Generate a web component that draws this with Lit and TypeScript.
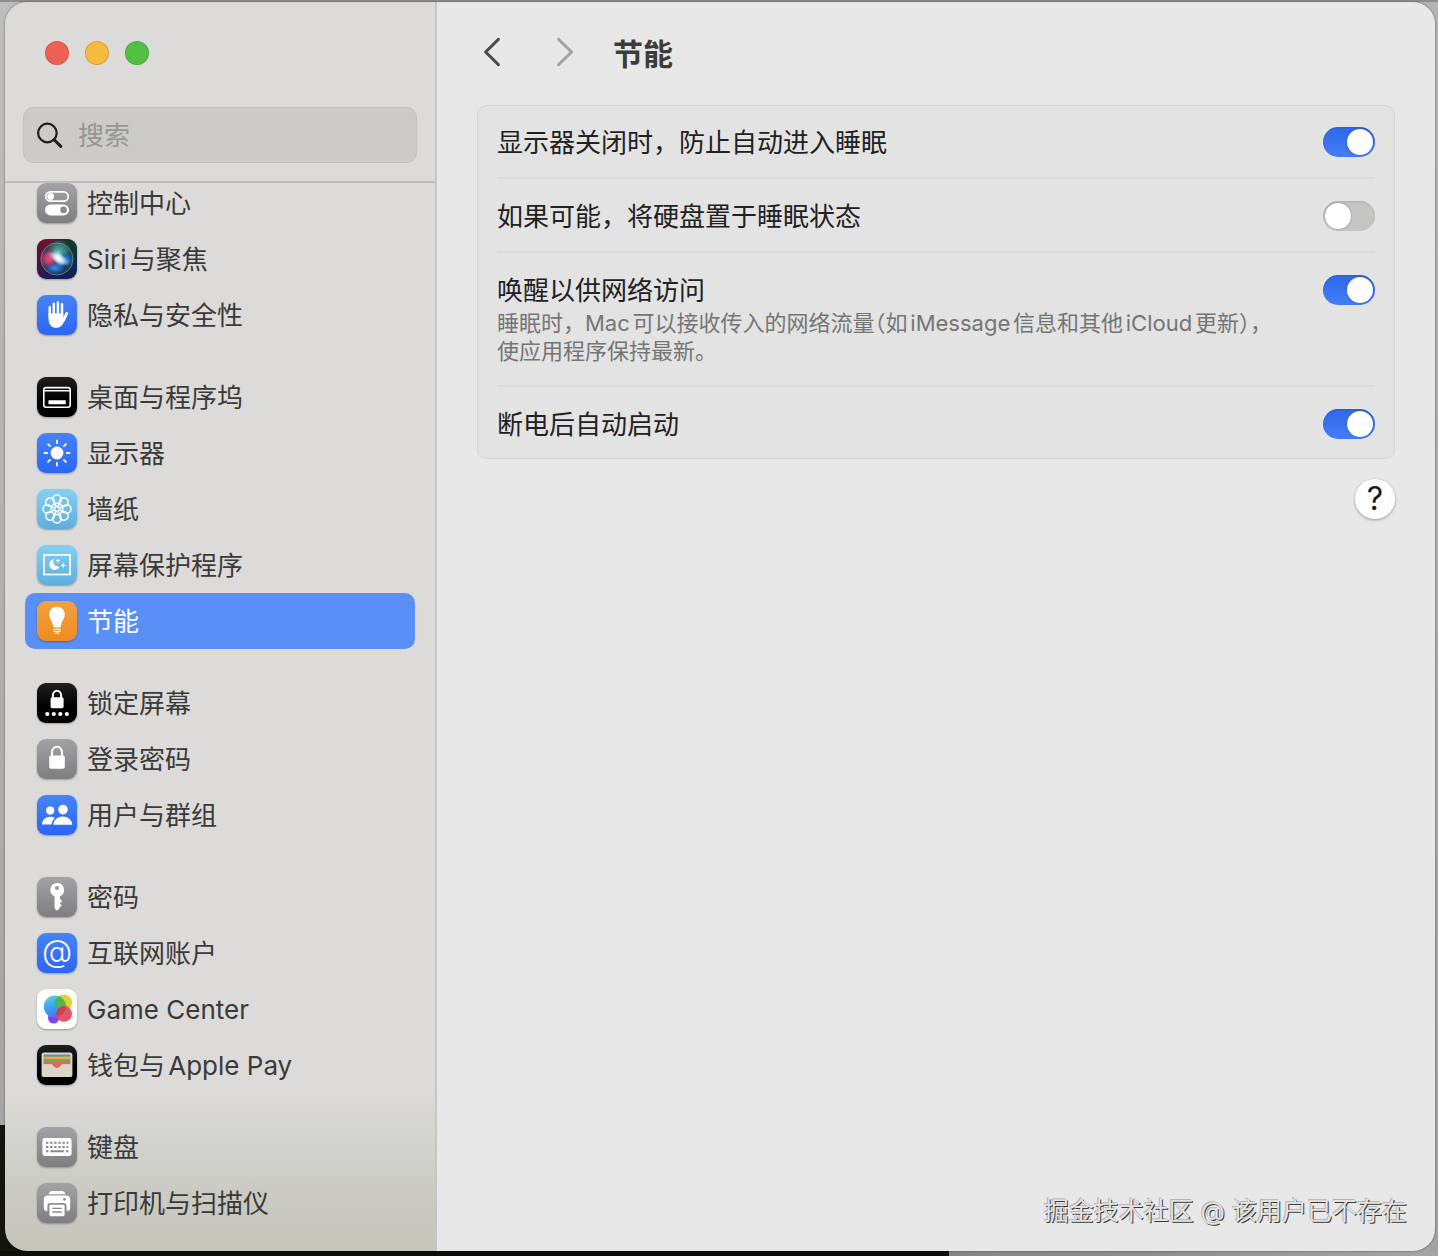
import { LitElement, html, svg, css, nothing, type TemplateResult } from "lit";
import { customElement, property, state } from "lit/decorators.js";
import { classMap } from "lit/directives/class-map.js";

interface Entry {
  id: string;
  label: string;
  tint: string;
}

interface Setting {
  id: string;
  label: string;
  note?: string;
  on: boolean;
}

const petal = (angle: number) => svg`
  <g transform="rotate(${angle} 20 20)">
    <circle cx="20" cy="10.2" r="4.2"/>
    <path stroke-width="1.1" d="M16.3 12.2L19.4 17.6M23.7 12.2L20.6 17.6"/>
  </g>`;

const GLYPHS: Record<string, TemplateResult> = {
  control: svg`
    <rect x="8.8" y="8.8" width="22.4" height="9.4" rx="4.7" fill="none" stroke="#fff" stroke-width="1.7"/>
    <circle cx="13.7" cy="13.5" r="3.4" fill="#fff"/>
    <rect x="8" y="21.4" width="24" height="11" rx="5.5" fill="#fff"/>
    <circle cx="26.6" cy="26.9" r="3.3" fill="#8b8b8d"/>`,
  siri: svg`
    <defs>
      <radialGradient id="core"><stop offset="0" stop-color="#fff"/><stop offset=".3" stop-color="#e6f6ff" stop-opacity=".85"/><stop offset="1" stop-color="#9fd8f5" stop-opacity="0"/></radialGradient>
      <radialGradient id="pink"><stop offset="0" stop-color="#f0457c"/><stop offset=".5" stop-color="#d83c68" stop-opacity=".8"/><stop offset="1" stop-color="#c3305f" stop-opacity="0"/></radialGradient>
      <radialGradient id="teal"><stop offset="0" stop-color="#55b5a2"/><stop offset=".5" stop-color="#3f9486" stop-opacity=".8"/><stop offset="1" stop-color="#2a8f80" stop-opacity="0"/></radialGradient>
      <radialGradient id="azure"><stop offset="0" stop-color="#3a90f2"/><stop offset=".5" stop-color="#2870d0" stop-opacity=".8"/><stop offset="1" stop-color="#1c50b8" stop-opacity="0"/></radialGradient>
    </defs>
    <circle cx="20" cy="20" r="16" fill="#28435c" fill-opacity=".8"/>
    <circle cx="22" cy="12.5" r="12" fill="url(#teal)"/>
    <circle cx="12.5" cy="20" r="10" fill="url(#pink)"/>
    <ellipse cx="28" cy="21" rx="9" ry="7" fill="url(#azure)"/>
    <ellipse cx="18" cy="29" rx="10" ry="6" fill="url(#azure)"/>
    <ellipse cx="21.5" cy="19.5" rx="13" ry="5" transform="rotate(28 21.5 19.5)" fill="url(#core)"/>
    <ellipse cx="21.5" cy="19" rx="6" ry="10" transform="rotate(-30 21.5 19)" fill="url(#core)"/>
    <circle cx="20" cy="20" r="16" fill="none" stroke="#8fa3ac" stroke-opacity=".65"/>`,
  privacy: svg`
    <g fill="none" stroke="#fff" stroke-width="2.5" stroke-linecap="round">
      <path d="M12.7 12.2V22M16.8 8.8V20M20.9 7.4V20M25 9.2V21"/>
      <path stroke-width="2.8" d="M29.8 18.4L26.2 25.8"/>
    </g>
    <path fill="#fff" d="M11.5 18.5H26.3V22.4L28.4 22.6C26.6 28.8 24.6 32.8 19.8 32.8C14.2 32.8 11.5 29.4 11.5 23Z"/>`,
  dock: svg`
    <rect x="6.8" y="10.6" width="26.4" height="19.6" rx="2.2" fill="none" stroke="#fff" stroke-width="1.6"/>
    <path d="M7 13.8H33" stroke="#fff" stroke-width="1.4"/>
    <rect x="11.4" y="23.2" width="17.4" height="4" rx=".6" fill="#fff"/>`,
  display: svg`
    <circle cx="20" cy="20" r="6.4" fill="#fff"/>
    <path fill="none" stroke="#fff" stroke-width="1.8" stroke-linecap="round" d="M20 7.4V10.2M20 29.8V32.6M7.4 20H10.2M29.8 20H32.6M11.1 11.1L13.1 13.1M26.9 26.9L28.9 28.9M11.1 28.9L13.1 26.9M26.9 13.1L28.9 11.1"/>`,
  wallpaper: svg`
    <g fill="none" stroke="#fff" stroke-width="1.5">
      ${[0, 45, 90, 135, 180, 225, 270, 315].map(petal)}
      <circle cx="20" cy="20" r="2.4" stroke-width="1.2"/>
    </g>`,
  saver: svg`
    <rect x="6.9" y="9.9" width="26.2" height="19.6" fill="none" stroke="#fff" stroke-width="1.7"/>
    <path fill="#fff" d="M16.6 14.2A5.4 5.4 0 1 0 22.6 21.7A5.6 5.6 0 0 1 16.6 14.2Z"/>
    <path fill="#fff" d="M21 13.2L21.7 15L23.4 15.6L21.7 16.3L21 18L20.3 16.3L18.6 15.6L20.3 15ZM26.2 17.6L27 19.7L29.1 20.4L27 21.2L26.2 23.3L25.4 21.2L23.3 20.4L25.4 19.7Z"/>`,
  energy: svg`
    <path fill="#fff" d="M20 5.8C24.6 5.8 27.8 9.1 27.8 13.4C27.8 17.6 24.8 19.4 24 24.4C23.8 25.8 23.2 26.4 22 26.4H18C16.8 26.4 16.2 25.8 16 24.4C15.2 19.4 12.2 17.6 12.2 13.4C12.2 9.1 15.4 5.8 20 5.8Z"/>
    <path fill="none" stroke="#fff" stroke-width="1.2" stroke-linecap="round" d="M16.6 28.3H23.4M16.8 30.3H23.2M18.4 32.2H21.6"/>`,
  lockscreen: svg`
    <path fill="none" stroke="#fff" stroke-width="2" d="M15.9 15V12.4A4.1 4.6 0 0 1 24.1 12.4V15"/>
    <rect x="13.6" y="14.2" width="13" height="11" rx="1.6" fill="#fff"/>
    <g fill="#fff"><circle cx="10.3" cy="31" r="2.1"/><circle cx="16.8" cy="31" r="2.1"/><circle cx="23.3" cy="31" r="2.1"/><circle cx="29.8" cy="31" r="2.1"/></g>`,
  login: svg`
    <path fill="none" stroke="#fff" stroke-width="2" d="M15 17.5V13.4A5 5.6 0 0 1 25 13.4V17.5"/>
    <rect x="12.2" y="16.6" width="15.6" height="13.2" rx="1.8" fill="#fff"/>`,
  users: svg`
    <g fill="#fff">
      <circle cx="13.2" cy="15.6" r="4.1"/>
      <path d="M5 29.6C5 25 8.6 21.8 13.2 21.8C15.2 21.8 16.8 22.3 18 23.2C15.9 24.8 14.8 27 14.7 29.6Z"/>
      <circle cx="26" cy="14.6" r="4.8"/>
      <path d="M16.4 29.8C16.4 25 20.4 21.4 25.8 21.4C31.2 21.4 35.2 25 35.2 29.8Z"/>
    </g>`,
  key: svg`
    <path fill="#fff" fill-rule="evenodd" d="M20 6A7 7 0 0 1 22.9 19.4V21.6L25.2 24L22.9 26.2L24.8 28.4L22.6 30.6V31.2L20 33.8L17.6 31.6V19.4A7 7 0 0 1 20 6ZM20 8.9A2.1 2.1 0 1 0 20 13.1A2.1 2.1 0 1 0 20 8.9Z"/>`,
  internet: svg`<text x="20" y="29" text-anchor="middle" fill="#fff" font-size="31" font-family="Inter, sans-serif" font-weight="300">@</text>`,
  game: svg`
    <defs>
      <linearGradient id="gb" x1="0" y1="0" x2=".4" y2="1"><stop offset="0" stop-color="#6fdcc0"/><stop offset=".5" stop-color="#3ea6ee"/><stop offset="1" stop-color="#3b7cf4"/></linearGradient>
      <linearGradient id="gy" x1="0" y1="1" x2="1" y2="0"><stop offset="0" stop-color="#3fb54a"/><stop offset=".45" stop-color="#c9d932"/><stop offset="1" stop-color="#fdc92f"/></linearGradient>
      <linearGradient id="gr" x1="0" y1="0" x2="1" y2="1"><stop offset="0" stop-color="#d8574a"/><stop offset="1" stop-color="#f23a68"/></linearGradient>
    </defs>
    <circle cx="16.6" cy="29" r="5.6" fill="#8b3df0"/>
    <circle cx="26.8" cy="13.8" r="8.4" fill="url(#gy)"/>
    <circle cx="17.8" cy="17.6" r="11" fill="url(#gb)"/>
    <path fill="#4cb84c" d="M21.4 7.2A11 11 0 0 1 28.1 21.9A8.4 8.4 0 0 1 21.4 7.2Z"/>
    <circle cx="27" cy="24.8" r="8" fill="url(#gr)" fill-opacity=".93"/>
    <path fill="#b3304f" fill-opacity=".5" d="M19.1 26.5C18.6 22 22.5 16.9 28.4 17C29 22.5 25 27.8 19.1 26.5Z"/>`,
  wallet: svg`
    <rect x="4.6" y="7.4" width="30.8" height="24.6" rx="2.6" fill="#d9d6ca"/>
    <rect x="6.6" y="9.4" width="26.8" height="4" rx="1" fill="#5f93b5"/>
    <rect x="6.6" y="11.6" width="26.8" height="3.4" fill="#e3b040"/>
    <rect x="6.6" y="14" width="26.8" height="3.4" fill="#70a95b"/>
    <path fill="#e0685c" d="M6.6 16.6H33.4V19.6H25.4C24 19.6 23 23 20 23C17 23 16 19.6 14.6 19.6H6.6Z"/>
    <path fill="#d9d6ca" d="M6.6 19.2H14.2C16 19.2 16.4 23 20 23C23.6 23 24 19.2 25.8 19.2H33.4V30H6.6Z"/>`,
  keyboard: svg`
    <rect x="5.4" y="11" width="29.2" height="18" rx="2.4" fill="#fff"/>
    <g fill="none" stroke="#8a8a8d" stroke-width="2">
      <path stroke-dasharray="2.4 1.7" d="M9 15.8H31.4M9 20H31.4"/>
      <path d="M9 24.2H11.4M13.4 24.2H26.8M28.9 24.2H31.3"/>
    </g>`,
  printer: svg`
    <path fill="#fff" d="M11.6 11.2C12 9 13.2 8 15.2 8H24.8C26.8 8 28 9 28.4 11.2Z"/>
    <path fill="#fff" d="M10.6 12.4H29.4C31.8 12.4 33.2 13.9 33.2 16.2V24.4C33.2 26.9 32 28.2 29.6 28.2V23C29.6 21 28.6 20 26.6 20H13.4C11.4 20 10.4 21 10.4 23V28.2C8 28.2 6.8 26.9 6.8 24.4V16.2C6.8 13.9 8.2 12.4 10.6 12.4Z"/>
    <circle cx="27.4" cy="16.4" r="1.3" fill="#8a8a8d"/>
    <rect x="12.4" y="21.8" width="15.2" height="11.4" rx="1.4" fill="#fff"/>
    <path stroke="#8a8a8d" stroke-width="1.4" stroke-linecap="round" d="M15.8 25.4H24.2M15.8 29H24.2"/>`,
};

const GROUPS: Entry[][] = [
  [
    { id: "control", label: "控制中心", tint: "gray" },
    { id: "siri", label: "Siri与聚焦", tint: "siri" },
    { id: "privacy", label: "隐私与安全性", tint: "blue" },
  ],
  [
    { id: "dock", label: "桌面与程序坞", tint: "black" },
    { id: "display", label: "显示器", tint: "blue" },
    { id: "wallpaper", label: "墙纸", tint: "sky" },
    { id: "saver", label: "屏幕保护程序", tint: "sky" },
    { id: "energy", label: "节能", tint: "orange" },
  ],
  [
    { id: "lockscreen", label: "锁定屏幕", tint: "black" },
    { id: "login", label: "登录密码", tint: "gray" },
    { id: "users", label: "用户与群组", tint: "blue" },
  ],
  [
    { id: "key", label: "密码", tint: "gray" },
    { id: "internet", label: "互联网账户", tint: "blue" },
    { id: "game", label: "Game Center", tint: "white" },
    { id: "wallet", label: "钱包与Apple Pay", tint: "black" },
  ],
  [
    { id: "keyboard", label: "键盘", tint: "gray" },
    { id: "printer", label: "打印机与扫描仪", tint: "gray" },
  ],
];

@customElement("settings-icon")
export class SettingsIcon extends LitElement {
  @property() name = "";
  @property() tint = "gray";

  static styles = css`
    :host { display: block; flex: none; width: 40px; height: 40px; }
    .tile { display: block; width: 40px; height: 40px; border-radius: 9px; box-shadow: 0 1px 2px rgba(0, 0, 0, 0.3); }
    .gray { background: linear-gradient(#a3a3a5, #7e7e80); }
    .blue { background: linear-gradient(#4683f7, #2c66f4); }
    .black { background: linear-gradient(#1f1f1f, #000 60%); }
    .sky { background: linear-gradient(#83d0f5, #5eaedd); }
    .orange { background: linear-gradient(#f0a33d, #ef8b22); }
    .white { background: #fff; }
    .siri { background: conic-gradient(from 45deg, #0c3a30, #0d2454 90deg, #12205a 150deg, #5c1038 230deg, #6b1430 290deg, #12352e 350deg, #0c3a30); }
  `;

  render() {
    return html`<svg class="tile ${this.tint}" viewBox="0 0 40 40" aria-hidden="true">${GLYPHS[this.name] ?? nothing}</svg>`;
  }
}

@customElement("settings-sidebar")
export class SettingsSidebar extends LitElement {
  @property() current = "";

  static styles = css`
    :host {
      display: flex; flex-direction: column; box-sizing: border-box; flex: none; width: 432px;
      border-right: 2px solid #c6c6c4;
      background: linear-gradient(to top, #c5c5bc, #cbcbc4 60px, #dcdbd9 160px);
    }
    .head {
      display: flex; flex-direction: column; gap: 42px;
      padding: 39px 18px 18px; border-bottom: 2px solid #bebdbb;
    }
    .lights { display: flex; gap: 16px; padding-left: 22px; }
    .light { width: 24px; height: 24px; padding: 0; border: 1px solid rgba(0, 0, 0, 0.12); border-radius: 50%; }
    .close { background: #ee6254; }
    .minimize { background: #f5ba3f; }
    .zoom { background: #52c043; }
    .search {
      display: flex; align-items: center; gap: 14px; box-sizing: border-box; height: 56px;
      padding: 0 12px; border: 1px solid #c3c2c0; border-radius: 10px; background: #cccbc9;
    }
    .lens { flex: none; width: 28px; height: 28px; }
    .field { flex: 1; min-width: 0; padding: 2px 0 0; border: 0; outline: 0; background: none; font: inherit; color: #222; }
    .field::placeholder { color: #969694; opacity: 1; }
    .scroll { flex: 1; overflow: hidden; padding: 0 20px 20px; }
    .list { display: flex; flex-direction: column; gap: 26px; margin-top: -8px; }
    .group { margin: 0; padding: 0; list-style: none; }
    .item {
      display: flex; align-items: center; gap: 10px; height: 56px; padding: 0 12px;
      border-radius: 10px; color: #3a3a39; text-decoration: none; white-space: nowrap;
    }
    .name { padding-top: 2px; }
    .selected { background: #5a8ff8; color: #fff; }
  `;

  private pick(event: Event, id: string) {
    event.preventDefault();
    this.dispatchEvent(new CustomEvent("pick", { detail: id }));
  }

  render() {
    return html`
      <div class="head">
        <div class="lights">
          <button class="light close" aria-label="关闭"></button>
          <button class="light minimize" aria-label="最小化"></button>
          <button class="light zoom" aria-label="缩放"></button>
        </div>
        <label class="search">
          <svg class="lens" viewBox="0 0 28 28" fill="none" stroke="#1c1c1c" stroke-linecap="round" aria-hidden="true">
            <circle cx="11.4" cy="12" r="9.3" stroke-width="2.2"/>
            <path d="M18.2 18.8L24.8 25.4" stroke-width="3"/>
          </svg>
          <input class="field" type="text" placeholder="搜索" aria-label="搜索" />
        </label>
      </div>
      <nav class="scroll">
        <div class="list">
          ${GROUPS.map((group) => html`
            <ul class="group">
              ${group.map(({ id, label, tint }) => html`
                <li>
                  <a class=${classMap({ item: true, selected: id === this.current })} href="#${id}"
                    @click=${(event: Event) => this.pick(event, id)}>
                    <settings-icon name=${id} tint=${tint}></settings-icon>
                    <span class="name">${label}</span>
                  </a>
                </li>`)}
            </ul>`)}
        </div>
      </nav>`;
  }
}

@customElement("energy-pane")
export class EnergyPane extends LitElement {
  @state() private settings: Setting[] = [
    { id: "awake", label: "显示器关闭时，防止自动进入睡眠", on: true },
    { id: "disks", label: "如果可能，将硬盘置于睡眠状态", on: false },
    {
      id: "network",
      label: "唤醒以供网络访问",
      note: "睡眠时，Mac可以接收传入的网络流量（如iMessage信息和其他iCloud更新），使应用程序保持最新。",
      on: true,
    },
    { id: "restart", label: "断电后自动启动", on: true },
  ];

  static styles = css`
    :host { display: flex; flex-direction: column; flex: 1; min-width: 0; box-sizing: border-box; padding: 26px 40px; background: #e8e8e8; }
    .bar { display: flex; align-items: center; height: 48px; margin-bottom: 29px; }
    .arrows { display: flex; gap: 40px; margin-right: 32px; }
    .arrow { display: flex; align-items: center; justify-content: center; width: 32px; height: 40px; padding: 0; border: 0; background: none; color: #4c4c4c; }
    .arrow:disabled { color: #a3a3a3; }
    .chevron { width: 20px; height: 32px; }
    .title { margin: 0; padding-top: 3px; font-size: 30px; line-height: 40px; font-weight: 700; color: #3c3c3c; }
    .card { border-radius: 10px; padding: 0 20px; background: #e3e3e3; box-shadow: inset 0 0 0 1px #d6d6d6; }
    .row { display: flex; align-items: flex-start; justify-content: space-between; gap: 24px; padding: 21px 0 17px; border-bottom: 2px solid #d9d9d9; }
    .row:last-child { border-bottom: 0; }
    .label { display: block; line-height: 34px; color: #212121; }
    .note { max-width: 784px; margin: 1px 0 3px; font-size: 22px; line-height: 28px; color: #757575; }
    .half { font-feature-settings: "halt"; }
    .switch {
      appearance: none; flex: none; box-sizing: border-box; width: 52px; height: 30px; margin: 1px 0; padding: 2px;
      border-radius: 15px; background: #c5c5c4; box-shadow: inset 0 1px 2px rgba(0, 0, 0, 0.12);
    }
    .switch::before { content: ""; display: block; width: 26px; height: 26px; border-radius: 50%; background: #fff; box-shadow: 0 0 2px rgba(0, 0, 0, 0.35); }
    .switch:checked { background: linear-gradient(#2f68ea, #437df5); }
    .switch:checked::before { margin-left: 22px; }
    .help {
      align-self: flex-end; width: 40px; height: 40px; margin-top: 20px; padding: 0; border: 0; border-radius: 50%;
      background: #fff; box-shadow: 0 1px 3px rgba(0, 0, 0, 0.35); color: #1c1c1c; font: inherit; font-size: 32px; line-height: 40px;
    }
  `;

  private toggle(id: string) {
    this.settings = this.settings.map((item) => (item.id === id ? { ...item, on: !item.on } : item));
  }

  /** Sets brackets, and a comma that follows one, at half width. */
  private typeset(text: string) {
    return text.split(/(（|），)/).map((part) => (/^[（）]/.test(part) ? html`<span class="half">${part}</span>` : part));
  }

  render() {
    return html`
      <header class="bar">
        <div class="arrows">
          <button class="arrow" aria-label="后退">
            <svg class="chevron" viewBox="0 0 20 32" fill="none" stroke="currentColor" stroke-width="3" stroke-linecap="round" stroke-linejoin="round" aria-hidden="true"><path d="M15.4 3.4L2.6 16L15.4 28.6"/></svg>
          </button>
          <button class="arrow" aria-label="前进" disabled>
            <svg class="chevron" viewBox="0 0 20 32" fill="none" stroke="currentColor" stroke-width="3" stroke-linecap="round" stroke-linejoin="round" aria-hidden="true"><path d="M3.6 3.4L16.6 16L3.6 28.6"/></svg>
          </button>
        </div>
        <h1 class="title">节能</h1>
      </header>
      <section class="card">
        ${this.settings.map((item) => html`
          <div class="row">
            <div>
              <label class="label" for=${item.id}>${item.label}</label>
              ${item.note ? html`<p class="note">${this.typeset(item.note)}</p>` : nothing}
            </div>
            <input class="switch" id=${item.id} type="checkbox" role="switch" .checked=${item.on} @change=${() => this.toggle(item.id)} />
          </div>`)}
      </section>
      <button class="help" aria-label="帮助">?</button>`;
  }
}

@customElement("app-root")
export class AppRoot extends LitElement {
  @state() private current = "energy";

  static styles = css`
    :host {
      display: flex; box-sizing: border-box; min-height: 100vh; padding: 2px 3px 5px 5px;
      background:
        linear-gradient(#8e8d8e, #8e8d8e) top / 100% 2px no-repeat,
        linear-gradient(to right, #0d0e06 66%, #868686 66%, #8c8c8c 78%, #a6a6a6) bottom / 100% 5px no-repeat,
        linear-gradient(#b4b4b4, #a2a2a2) right / 30px 100% no-repeat,
        linear-gradient(#bdbdbd, #a6a6a6 1125px, #14150c 1125px);
      font-family: Inter, "Noto Sans CJK SC", sans-serif; font-size: 26px; line-height: 32px; text-autospace: normal;
    }
    .window { position: relative; display: flex; flex: 1; min-width: 0; overflow: hidden; border-radius: 22px; box-shadow: 0 0 2px rgba(0, 0, 0, 0.6); }
    .credit {
      position: absolute; right: 28px; bottom: 24px; margin: 0; font-size: 25px; line-height: 32px;
      color: #e4e4e4; text-shadow: 1px 1px 0 #3a3a3a, -1px -1px 0 #b5b5b5;
    }
  `;

  render() {
    return html`
      <div class="window">
        <settings-sidebar .current=${this.current} @pick=${(event: CustomEvent<string>) => (this.current = event.detail)}></settings-sidebar>
        <energy-pane></energy-pane>
        <p class="credit">掘金技术社区 @ 该用户已不存在</p>
      </div>`;
  }
}
